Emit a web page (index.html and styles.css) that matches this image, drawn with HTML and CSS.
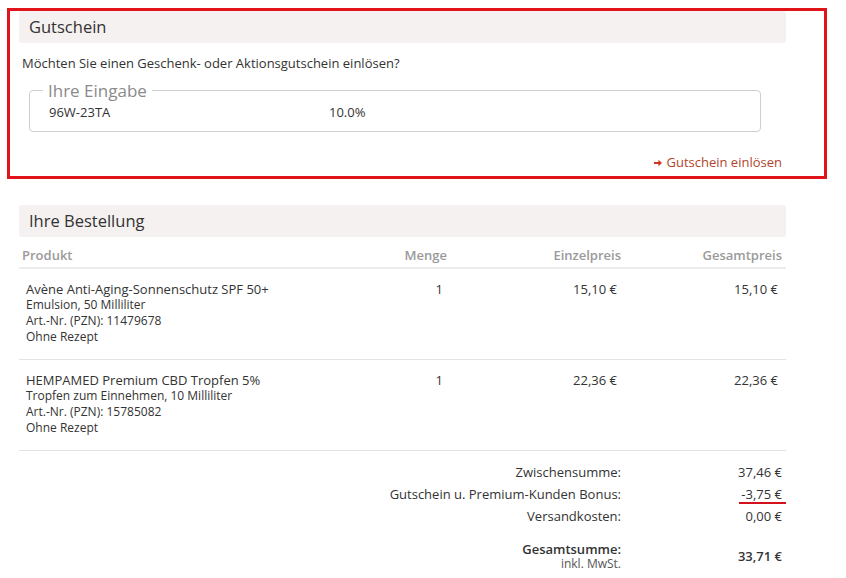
FILE: index.html
```html
<!DOCTYPE html>
<html lang="de">
  <head>
    <meta charset="UTF-8" />
    <meta name="viewport" content="width=device-width, initial-scale=1.0" />
    <title>Warenkorb</title>
    <link rel="stylesheet" href="styles.css">
  </head>
  <body>
    <div class="voucher">
      <h2 class="bar">Gutschein</h2>
      <p class="question">Möchten Sie einen Geschenk- oder Aktionsgutschein einlösen?</p>
      <fieldset class="entry">
        <legend>Ihre Eingabe</legend>
        <div class="entry-row">
          <span class="code">96W-23TA</span>
          <span class="rate">10.0%</span>
        </div>
      </fieldset>
      <div class="redeem">
        <a href="#">
          <svg width="8" height="8" viewBox="0 0 8 8"><path d="M0 3h4.4V0.8L8 4 4.4 7.2V5H0z" fill="#d2321f"/></svg>
          Gutschein einlösen
        </a>
      </div>
    </div>

    <div class="order">
      <h2 class="bar">Ihre Bestellung</h2>
      <div class="grid head">
        <div>Produkt</div>
        <div class="num">Menge</div>
        <div class="num">Einzelpreis</div>
        <div class="num">Gesamtpreis</div>
      </div>
      <div class="grid item">
        <div class="product">
          <div class="name">Avène Anti-Aging-Sonnenschutz SPF 50+</div>
          <div class="info">Emulsion, 50 Milliliter</div>
          <div class="info">Art.-Nr. (PZN): 11479678</div>
          <div class="info">Ohne Rezept</div>
        </div>
        <div class="num">1</div>
        <div class="num">15,10 €</div>
        <div class="num">15,10 €</div>
      </div>
      <div class="grid item">
        <div class="product">
          <div class="name">HEMPAMED Premium CBD Tropfen 5%</div>
          <div class="info">Tropfen zum Einnehmen, 10 Milliliter</div>
          <div class="info">Art.-Nr. (PZN): 15785082</div>
          <div class="info">Ohne Rezept</div>
        </div>
        <div class="num">1</div>
        <div class="num">22,36 €</div>
        <div class="num">22,36 €</div>
      </div>

      <div class="totals">
        <div class="label">Zwischensumme:</div>
        <div class="value">37,46 €</div>
        <div class="label">Gutschein u. Premium-Kunden Bonus:</div>
        <div class="value"><span class="marked">-3,75 €</span></div>
        <div class="label">Versandkosten:</div>
        <div class="value">0,00 €</div>
        <div class="label grand">
          <strong>Gesamtsumme:</strong>
          <small>inkl. MwSt.</small>
        </div>
        <div class="value grand-value">33,71 €</div>
      </div>
    </div>
  </body>
</html>
```

FILE: styles.css
```css
body {
  margin: 0;
  background: #fff;
  color: #333;
  font-family: "Open Sans", "Liberation Sans", sans-serif;
  font-size: 13px;
}
.voucher {
  box-sizing: border-box;
  width: 820px;
  margin: 8px 0 0 7px;
  padding: 0 38px 5px 9px;
  border: 3px solid #e2141b;
}
.bar {
  margin: 0;
  height: 32px;
  line-height: 32px;
  padding-left: 10px;
  background-color: #f4f1f0;
  border-radius: 3px;
  font-size: 16.5px;
  font-weight: 400;
  color: #333;
}
.question {
  margin: 11px 0 0 3px;
  line-height: 18px;
}
.entry {
  box-sizing: border-box;
  width: 732px;
  margin: 7px 0 0 10px;
  padding: 1px 19px 10px;
  border: 1px solid #cfcfcf;
  border-radius: 4px;
}
.entry legend {
  margin-left: -6px;
  padding: 0 5px;
  font-size: 17px;
  line-height: 23px;
  color: #8a8a8a;
}
.entry-row {
  display: flex;
  line-height: 18px;
}
.code {
  width: 280px;
}
.redeem {
  margin-top: 21px;
  padding-right: 4px;
  text-align: right;
  line-height: 18px;
}
.redeem a {
  color: #b0442c;
  text-decoration: none;
}
.redeem svg {
  margin-right: 1px;
  vertical-align: 0;
}

.order {
  width: 767px;
  margin: 26px 0 0 19px;
}
.grid {
  display: grid;
  grid-template-columns: 1fr 90px 174px 162px;
}
.num {
  text-align: right;
}
.head {
  padding: 9px 0 3px;
  border-bottom: 2px solid #ececec;
  line-height: 18px;
  font-weight: 600;
  color: #9a9a9a;
}
.head div {
  padding: 0 3px;
}
.head div:last-child {
  padding-right: 4px;
}
.item {
  padding: 12px 0 14px;
  border-bottom: 1px solid #e3e3e3;
  line-height: 16px;
}
.item > div {
  padding: 0 7px;
}
.item > div:last-child {
  padding-right: 8px;
}
.name {
  font-size: 13px;
}
.info {
  font-size: 12px;
}

.totals {
  display: grid;
  grid-template-columns: 1fr 162px;
  padding-top: 10px;
  line-height: 22px;
}
.label {
  padding-right: 3px;
  text-align: right;
}
.value {
  padding-right: 4px;
  text-align: right;
}
.marked {
  display: inline-block;
  margin-right: -4px;
  padding: 0 4px 0 2px;
  line-height: 16px;
  border-bottom: 2px solid #d3121c;
}
.grand {
  margin-top: 14px;
  line-height: 16px;
}
.grand strong {
  display: block;
  font-weight: 600;
}
.grand small {
  display: block;
  font-size: 12px;
  line-height: 14px;
  color: #555;
}
.grand-value {
  margin-top: 14px;
  align-self: center;
  font-weight: 600;
}
```
